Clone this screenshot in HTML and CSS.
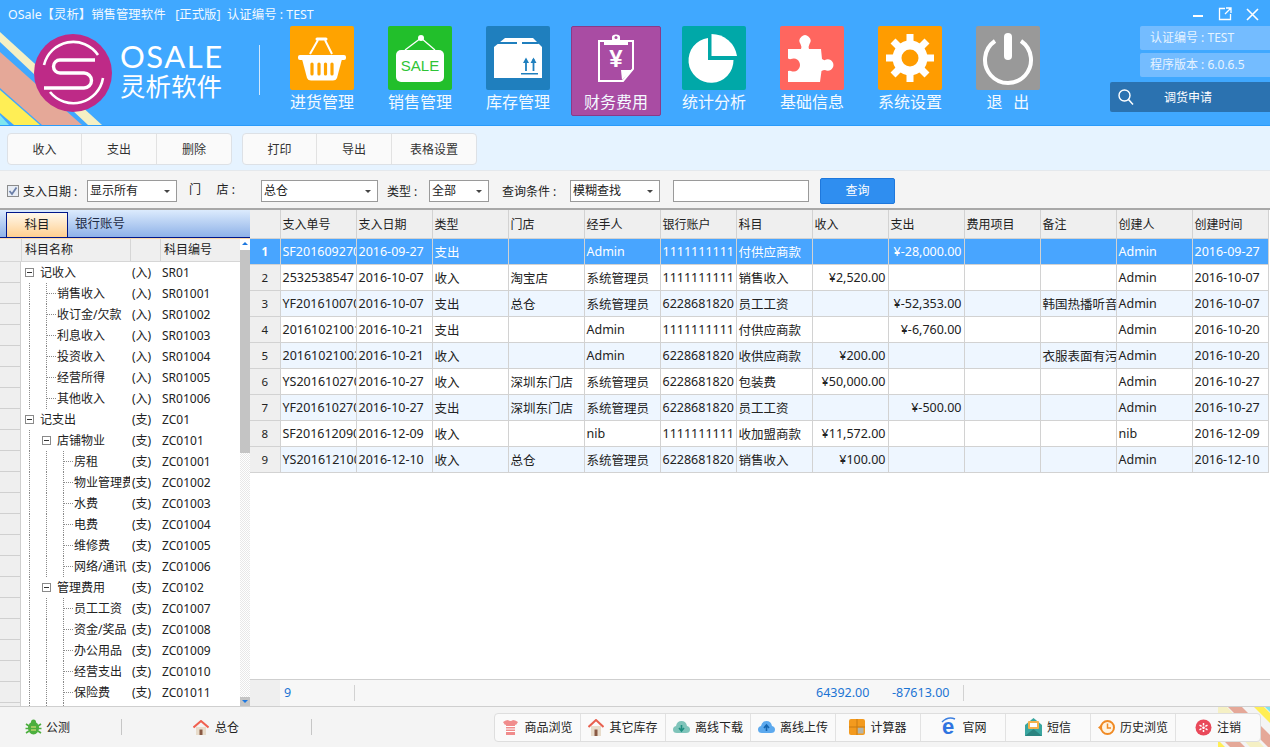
FILE: index.html
```html
<!DOCTYPE html>
<html lang="zh-CN">
<head>
<meta charset="utf-8">
<title>OSale 灵析</title>
<link rel="stylesheet" href="styles.css">
</head>
<body>
<div class="app">
  <header class="header">
    <svg class="stripes" width="110" height="96" viewBox="0 0 110 96">
      <polygon points="0,2 0,12 88,95 102,95" fill="#F5F0C4"/>
      <polygon points="0,22 0,58 42,95 82,95" fill="#E5A898"/>
      <polygon points="0,60 0,83 14,95 40,95" fill="#FFEE55"/>
      <polygon points="0,85 0,95 9,95" fill="#7FE6EE"/>
    </svg>
    <div class="titlebar">
      <span class="title">OSale【灵析】销售管理软件&nbsp;&nbsp;&nbsp;[正式版]&nbsp;&nbsp;认证编号 : TEST</span>
      <div class="winctl">
        <svg width="12" height="12" viewBox="0 0 12 12"><rect x="1" y="7" width="10" height="2" fill="#fff"/></svg>
        <svg width="14" height="14" viewBox="0 0 14 14"><path d="M7 1.500H1.500V12.500H12.500V7M8 1H13V6M13 1L7 7" fill="none" stroke="#fff" stroke-width="1.300"/></svg>
        <svg width="13" height="13" viewBox="0 0 13 13"><path d="M1 1L12 12M12 1L1 12" stroke="#fff" stroke-width="1.600"/></svg>
      </div>
    </div>
    <div class="hbody">
      <div class="brand">
        <svg class="logo" width="78" height="78" viewBox="0 0 78 78">
          <circle cx="39" cy="39" r="39" fill="#BE2A87"/>
          <path d="M61 26H26A6.500 6.500 0 0 0 26 39H50A7.500 7.500 0 0 1 50 54H10" fill="none" stroke="#fff" stroke-width="3.400"/>
          <path d="M10 31A30 30 0 0 1 64 21M69 44A30 30 0 0 1 16 58" fill="none" stroke="#fff" stroke-width="2.600"/>
        </svg>
        <div class="brandtext">
          <div class="osale">OSALE</div>
          <div class="lingxi">灵析软件</div>
        </div>
        <div class="bsep"></div>
      </div>
      <nav class="nav">
        <div class="navitem">
          <div class="ico orange1">
            <svg width="64" height="64" viewBox="0 0 64 64"><path d="M20 28L28 14M42 28L35 14" fill="none" stroke="#fff" stroke-width="2"/><path d="M27 13H36" stroke="#fff" stroke-width="3" stroke-linecap="round"/><path d="M12 33H52L47 52Q46 54.500 43 54.500H21Q18 54.500 17 52Z" fill="#fff"/><rect x="8" y="29" width="48" height="5" rx="2" fill="#fff"/><path d="M22 38V48M29 38V48M35.500 38V48M42 38V48" stroke="#FFA300" stroke-width="3.200" stroke-linecap="round"/></svg>
          </div>
          <div class="navlabel">进货管理</div>
        </div>
        <div class="navitem">
          <div class="ico green">
            <svg width="64" height="64" viewBox="0 0 64 64"><circle cx="33" cy="12" r="3" fill="#fff"/><path d="M33 12L17 24M33 12L47 24" stroke="#fff" stroke-width="1.300"/><rect x="8" y="24" width="48" height="32" rx="5" fill="#fff"/><text x="32" y="44.500" text-anchor="middle" class="saletxt">SALE</text></svg>
          </div>
          <div class="navlabel">销售管理</div>
        </div>
        <div class="navitem">
          <div class="ico blue">
            <svg width="64" height="64" viewBox="0 0 64 64"><path d="M19 12H47L56 21V52H8V21Z" fill="#fff"/><path d="M12 16H31V18H11ZM36 16H52L53 18H36Z" fill="#1F7FBE"/><path d="M40 33V45M47.500 33V45" stroke="#1F7FBE" stroke-width="1.800"/><path d="M40 31.500L37 37H43ZM47.500 31.500L44.500 37H50.500Z" fill="#1F7FBE"/><rect x="35" y="47" width="17" height="1.500" fill="#1F7FBE"/></svg>
          </div>
          <div class="navlabel">库存管理</div>
        </div>
        <div class="navitem active">
          <div class="ico">
            <svg width="64" height="64" viewBox="0 0 64 64"><path d="M21 14H15V54H39L49 42V14H43" fill="none" stroke="#fff" stroke-width="2"/><path d="M20 13H28V10Q28 7.500 32 7.500Q36 7.500 36 10V13H44V18H20Z" fill="#fff"/><circle cx="32" cy="10.500" r="1.500" fill="#A94CA3"/><text x="32" y="40" text-anchor="middle" class="yen">¥</text><path d="M37 43H49L38 53Z" fill="#fff"/></svg>
          </div>
          <div class="navlabel">财务费用</div>
        </div>
        <div class="navitem">
          <div class="ico teal">
            <svg width="64" height="64" viewBox="0 0 64 64"><path d="M26 12V34H51.500A22.500 22.500 0 1 1 26 12Z" fill="#fff"/><path d="M29.500 8V30H55A26 26 0 0 0 29.500 8Z" fill="#fff"/></svg>
          </div>
          <div class="navlabel">统计分析</div>
        </div>
        <div class="navitem">
          <div class="ico coral">
            <svg width="64" height="64" viewBox="0 0 64 64"><path d="M8 23H21Q22 21 20.500 18A5.500 5.500 0 1 1 29.500 18Q28 21 29 23H41L42 33Q44 34.500 45 34A5.700 5.700 0 1 1 45 44Q43 44 41.500 45L40 56H8V45Q10 44.500 11 45A6.500 6.500 0 1 0 11 33Q10 33.500 8 32.500Z" fill="#fff"/></svg>
          </div>
          <div class="navlabel">基础信息</div>
        </div>
        <div class="navitem">
          <div class="ico orange2">
            <svg width="64" height="64" viewBox="0 0 64 64"><g fill="#fff"><rect x="28.500" y="8" width="7" height="48"/><rect x="8" y="28.500" width="48" height="7"/><rect x="28.500" y="8" width="7" height="48" transform="rotate(45 32 32)"/><rect x="28.500" y="8" width="7" height="48" transform="rotate(-45 32 32)"/></g><circle cx="32" cy="32" r="13" fill="none" stroke="#fff" stroke-width="9"/><circle cx="32" cy="32" r="8.500" fill="#FF9C00"/></svg>
          </div>
          <div class="navlabel">系统设置</div>
        </div>
        <div class="navitem">
          <div class="ico grey">
            <svg width="64" height="64" viewBox="0 0 64 64"><path d="M19 15A23 23 0 1 0 45 15" fill="none" stroke="#fff" stroke-width="4"/><rect x="28" y="7" width="8" height="27" rx="4" fill="#fff"/></svg>
          </div>
          <div class="navlabel">退&nbsp;&nbsp;&nbsp;出</div>
        </div>
      </nav>
      <aside class="hside">
        <div class="infobox">认证编号 : TEST</div>
        <div class="infobox">程序版本 : 6.0.6.5</div>
        <div class="apply">
          <svg width="18" height="18" viewBox="0 0 18 18"><circle cx="7.500" cy="7.500" r="5.500" fill="none" stroke="#fff" stroke-width="1.400"/><path d="M11.500 11.500L16 16.500" stroke="#fff" stroke-width="1.500"/></svg>
          <span>调货申请</span>
        </div>
      </aside>
    </div>
  </header>

  <div class="toolbar">
    <div class="btngroup">
      <div class="tbtn">收入</div><div class="tbtn">支出</div><div class="tbtn">删除</div>
    </div>
    <div class="btngroup">
      <div class="tbtn">打印</div><div class="tbtn">导出</div><div class="tbtn wide">表格设置</div>
    </div>
  </div>

  <div class="filter">
    <span class="check"><svg width="10" height="10" viewBox="0 0 10 10"><path d="M1.500 5L4 8L8.500 1.500" fill="none" stroke="#6B7FA8" stroke-width="1.800"/></svg></span>
    <span class="flabel l-date">支入日期 :</span>
    <div class="sel w90">显示所有</div>
    <span class="flabel l-store">门&nbsp;&nbsp;&nbsp;&nbsp;&nbsp;店 :</span>
    <div class="sel w117">总仓</div>
    <span class="flabel l-type">类型 :</span>
    <div class="sel w60">全部</div>
    <span class="flabel l-cond">查询条件 :</span>
    <div class="sel w90">模糊查找</div>
    <div class="finput"></div>
    <div class="querybtn">查询</div>
  </div>

  <main class="main">
    <section class="left">
      <div class="tabs">
        <div class="tab on">科目</div>
        <div class="tab">银行账号</div>
      </div>
      <div class="treewrap">
        <div class="treemain">
          <div class="treehead">
            <div class="th0"></div>
            <div class="th1">科目名称</div>
            <div class="th2"></div>
            <div class="th3">科目编号</div>
          </div>
          <div class="treebody">
            <div class="tr"><div class="ind"></div><div class="nm"><i class="box"></i>记收入</div><div class="tg">(入)</div><div class="cd">SR01</div></div>
            <div class="tr"><div class="ind"></div><div class="nm"><i class="g"></i><i class="h"></i>销售收入</div><div class="tg">(入)</div><div class="cd">SR01001</div></div>
            <div class="tr"><div class="ind"></div><div class="nm"><i class="g"></i><i class="h"></i>收订金/欠款</div><div class="tg">(入)</div><div class="cd">SR01002</div></div>
            <div class="tr"><div class="ind"></div><div class="nm"><i class="g"></i><i class="h"></i>利息收入</div><div class="tg">(入)</div><div class="cd">SR01003</div></div>
            <div class="tr"><div class="ind"></div><div class="nm"><i class="g"></i><i class="h"></i>投资收入</div><div class="tg">(入)</div><div class="cd">SR01004</div></div>
            <div class="tr"><div class="ind"></div><div class="nm"><i class="g"></i><i class="h"></i>经营所得</div><div class="tg">(入)</div><div class="cd">SR01005</div></div>
            <div class="tr"><div class="ind"></div><div class="nm"><i class="g"></i><i class="h"></i>其他收入</div><div class="tg">(入)</div><div class="cd">SR01006</div></div>
            <div class="tr"><div class="ind"></div><div class="nm"><i class="box"></i>记支出</div><div class="tg">(支)</div><div class="cd">ZC01</div></div>
            <div class="tr"><div class="ind"></div><div class="nm"><i class="g"></i><i class="box"></i>店铺物业</div><div class="tg">(支)</div><div class="cd">ZC0101</div></div>
            <div class="tr"><div class="ind"></div><div class="nm"><i class="g"></i><i class="g"></i><i class="h"></i>房租</div><div class="tg">(支)</div><div class="cd">ZC01001</div></div>
            <div class="tr"><div class="ind"></div><div class="nm"><i class="g"></i><i class="g"></i><i class="h"></i>物业管理费</div><div class="tg">(支)</div><div class="cd">ZC01002</div></div>
            <div class="tr"><div class="ind"></div><div class="nm"><i class="g"></i><i class="g"></i><i class="h"></i>水费</div><div class="tg">(支)</div><div class="cd">ZC01003</div></div>
            <div class="tr"><div class="ind"></div><div class="nm"><i class="g"></i><i class="g"></i><i class="h"></i>电费</div><div class="tg">(支)</div><div class="cd">ZC01004</div></div>
            <div class="tr"><div class="ind"></div><div class="nm"><i class="g"></i><i class="g"></i><i class="h"></i>维修费</div><div class="tg">(支)</div><div class="cd">ZC01005</div></div>
            <div class="tr"><div class="ind"></div><div class="nm"><i class="g"></i><i class="g"></i><i class="h"></i>网络/通讯</div><div class="tg">(支)</div><div class="cd">ZC01006</div></div>
            <div class="tr"><div class="ind"></div><div class="nm"><i class="g"></i><i class="box"></i>管理费用</div><div class="tg">(支)</div><div class="cd">ZC0102</div></div>
            <div class="tr"><div class="ind"></div><div class="nm"><i class="g"></i><i class="g"></i><i class="h"></i>员工工资</div><div class="tg">(支)</div><div class="cd">ZC01007</div></div>
            <div class="tr"><div class="ind"></div><div class="nm"><i class="g"></i><i class="g"></i><i class="h"></i>资金/奖品</div><div class="tg">(支)</div><div class="cd">ZC01008</div></div>
            <div class="tr"><div class="ind"></div><div class="nm"><i class="g"></i><i class="g"></i><i class="h"></i>办公用品</div><div class="tg">(支)</div><div class="cd">ZC01009</div></div>
            <div class="tr"><div class="ind"></div><div class="nm"><i class="g"></i><i class="g"></i><i class="h"></i>经营支出</div><div class="tg">(支)</div><div class="cd">ZC01010</div></div>
            <div class="tr"><div class="ind"></div><div class="nm"><i class="g"></i><i class="g"></i><i class="h"></i>保险费</div><div class="tg">(支)</div><div class="cd">ZC01011</div></div>
            <div class="tr"><div class="ind"></div><div class="nm"><i class="g"></i><i class="g"></i><i class="g"></i></div><div class="tg"></div><div class="cd"></div></div>
          </div>
        </div>
        <div class="scroll">
          <div class="sup"></div>
          <div class="sthumb"></div>
          <div class="strack"></div>
          <div class="sdown"></div>
        </div>
      </div>
    </section>

    <section class="right">
      <div class="gridarea">
        <table class="grid">
          <colgroup><col class="c0"><col class="c"><col class="c"><col class="c"><col class="c"><col class="c"><col class="c"><col class="c"><col class="c"><col class="c"><col class="c"><col class="c"><col class="c"><col class="c"></colgroup>
          <thead>
            <tr><th></th><th>支入单号</th><th>支入日期</th><th>类型</th><th>门店</th><th>经手人</th><th>银行账户</th><th>科目</th><th>收入</th><th>支出</th><th>费用项目</th><th>备注</th><th>创建人</th><th>创建时间</th></tr>
          </thead>
          <tbody>
            <tr class="sel-row"><td class="rn">1</td><td>SF2016092700</td><td>2016-09-27</td><td>支出</td><td></td><td>Admin</td><td>1111111111</td><td>付供应商款</td><td class="num"></td><td class="num">¥-28,000.00</td><td></td><td></td><td>Admin</td><td>2016-09-27</td></tr>
            <tr><td class="rn">2</td><td>2532538547</td><td>2016-10-07</td><td>收入</td><td>淘宝店</td><td>系统管理员</td><td>1111111111</td><td>销售收入</td><td class="num">¥2,520.00</td><td class="num"></td><td></td><td></td><td>Admin</td><td>2016-10-07</td></tr>
            <tr class="alt"><td class="rn">3</td><td>YF2016100700</td><td>2016-10-07</td><td>支出</td><td>总仓</td><td>系统管理员</td><td>6228681820</td><td>员工工资</td><td class="num"></td><td class="num">¥-52,353.00</td><td></td><td>韩国热播听音</td><td>Admin</td><td>2016-10-07</td></tr>
            <tr><td class="rn">4</td><td>20161021001</td><td>2016-10-21</td><td>支出</td><td></td><td>Admin</td><td>1111111111</td><td>付供应商款</td><td class="num"></td><td class="num">¥-6,760.00</td><td></td><td></td><td>Admin</td><td>2016-10-20</td></tr>
            <tr class="alt"><td class="rn">5</td><td>20161021002</td><td>2016-10-21</td><td>收入</td><td></td><td>Admin</td><td>6228681820</td><td>收供应商款</td><td class="num">¥200.00</td><td class="num"></td><td></td><td>衣服表面有污渍</td><td>Admin</td><td>2016-10-20</td></tr>
            <tr><td class="rn">6</td><td>YS2016102700</td><td>2016-10-27</td><td>收入</td><td>深圳东门店</td><td>系统管理员</td><td>6228681820</td><td>包装费</td><td class="num">¥50,000.00</td><td class="num"></td><td></td><td></td><td>Admin</td><td>2016-10-27</td></tr>
            <tr class="alt"><td class="rn">7</td><td>YF2016102700</td><td>2016-10-27</td><td>支出</td><td>深圳东门店</td><td>系统管理员</td><td>6228681820</td><td>员工工资</td><td class="num"></td><td class="num">¥-500.00</td><td></td><td></td><td>Admin</td><td>2016-10-27</td></tr>
            <tr><td class="rn">8</td><td>SF2016120900</td><td>2016-12-09</td><td>收入</td><td></td><td>nib</td><td>1111111111</td><td>收加盟商款</td><td class="num">¥11,572.00</td><td class="num"></td><td></td><td></td><td>nib</td><td>2016-12-09</td></tr>
            <tr class="alt"><td class="rn">9</td><td>YS2016121000</td><td>2016-12-10</td><td>收入</td><td>总仓</td><td>系统管理员</td><td>6228681820</td><td>销售收入</td><td class="num">¥100.00</td><td class="num"></td><td></td><td></td><td>Admin</td><td>2016-12-10</td></tr>
          </tbody>
        </table>
      </div>
      <div class="sumbar">
        <div class="s0"></div>
        <div class="s1">9</div>
        <div class="s6"></div>
        <div class="s2">64392.00</div>
        <div class="s3">-87613.00</div>
      </div>
    </section>
  </main>

  <footer class="footer">
    <svg class="fstripes" width="52" height="40" viewBox="0 0 52 40">
      <polygon points="-40,0 -33,0 7,40 0,40" fill="#FFEE55"/>
      <polygon points="-28,0 -13,0 27,40 12,40" fill="#E5A898"/>
      <polygon points="-5,0 9,0 46,40 32,40" fill="#F5F0C4"/>
      <polygon points="10,0 24,0 64,40 50,40" fill="#E5A898"/>
      <polygon points="36,0 46,0 86,40 76,40" fill="#FFEE55"/>
      <polygon points="47,0 60,0 100,40 87,40" fill="#7FE6EE"/>
    </svg>
    <div class="fleft f1">
      <svg width="17" height="17" viewBox="0 0 17 17"><ellipse cx="8.500" cy="9" rx="5.500" ry="6.500" fill="#4CAF3E"/><circle cx="8.500" cy="3" r="2.500" fill="#4CAF3E"/><path d="M1 5L4 7M16 5L13 7M0.500 9.500H4M16.500 9.500H13M1 14L4 12M16 14L13 12" stroke="#4CAF3E" stroke-width="1.600"/><path d="M6 8H11M6 11H11" stroke="#B9D46A" stroke-width="1.500"/></svg>
      <span>公测</span>
    </div>
    <div class="fleft f2">
      <svg width="16" height="15" viewBox="0 0 16 15"><path d="M3 7H13V15H3Z" fill="#E8DCCB"/><path d="M0.500 7.500L8 1L15.500 7.500" fill="none" stroke="#F0604F" stroke-width="2"/><rect x="6.500" y="9.500" width="3" height="5.500" fill="#8A5A44"/></svg>
      <span>总仓</span>
    </div>
    <div class="fspace"></div>
    <div class="fbtns">
      <div class="fbtn">
        <svg width="17" height="17" viewBox="0 0 17 17"><path d="M1 3Q4 1 6 1Q8.500 3 11 1Q13 1 16 3L14 6L13 5.500V16H4V5.500L3 6Z" fill="#F08C8C"/><path d="M4 7.500H13M4 10H13M4 12.500H13" stroke="#fff" stroke-width="1.100"/></svg>
        <span>商品浏览</span>
      </div>
      <div class="fbtn">
        <svg width="16" height="17" viewBox="0 0 16 17"><path d="M3 7H13V17H3Z" fill="#E8DCCB"/><path d="M0.500 8L8 1L15.500 8" fill="none" stroke="#E8604F" stroke-width="2"/><rect x="6.500" y="10.500" width="3" height="6.500" fill="#8A5A44"/></svg>
        <span>其它库存</span>
      </div>
      <div class="fbtn">
        <svg width="17" height="14" viewBox="0 0 17 14"><path d="M4 13Q0 13 0 9.500Q0 6.500 3 6Q4 1 8.500 1Q13 1 14 6Q17 6.500 17 9.500Q17 13 13 13Z" fill="#7FC4BA"/><path d="M8.500 5V10M6 8L8.500 11L11 8" fill="none" stroke="#1E8E80" stroke-width="1.600"/></svg>
        <span>离线下载</span>
      </div>
      <div class="fbtn">
        <svg width="17" height="14" viewBox="0 0 17 14"><path d="M4 13Q0 13 0 9.500Q0 6.500 3 6Q4 1 8.500 1Q13 1 14 6Q17 6.500 17 9.500Q17 13 13 13Z" fill="#5CA9EE"/><path d="M8.500 11V6M6 8L8.500 5L11 8" fill="none" stroke="#1565B0" stroke-width="1.600"/></svg>
        <span>离线上传</span>
      </div>
      <div class="fbtn">
        <svg width="16" height="16" viewBox="0 0 16 16"><rect width="16" height="16" rx="2" fill="#F39A1E"/><rect x="8.500" y="8.500" width="6" height="6" fill="#B5B5A8"/><path d="M8 0V16M0 8H16" stroke="#C97A10" stroke-width="1"/></svg>
        <span>计算器</span>
      </div>
      <div class="fbtn">
        <svg width="18" height="20" viewBox="0 0 18 20"><text x="9" y="17" text-anchor="middle" class="ie">e</text><path d="M3 5Q9 -1 16 2" fill="none" stroke="#3C7FE0" stroke-width="1.500"/></svg>
        <span>官网</span>
      </div>
      <div class="fbtn">
        <svg width="17" height="18" viewBox="0 0 17 18"><path d="M0 7L8.500 0L17 7V18H0Z" fill="#3AA6A0"/><rect x="3" y="3" width="11" height="8" rx="1" fill="#F5B24A"/><rect x="5" y="5" width="7" height="4" fill="#fff"/><path d="M0 18L8.500 11L17 18" fill="#2B8480"/></svg>
        <span>短信</span>
      </div>
      <div class="fbtn">
        <svg width="17" height="17" viewBox="0 0 17 17"><circle cx="9.500" cy="8.500" r="6.500" fill="#FFF3E0" stroke="#F08A24" stroke-width="2"/><path d="M9.500 4.500V9H13" fill="none" stroke="#F08A24" stroke-width="1.500"/><path d="M0 8.500L3 6V11Z" fill="#F08A24"/></svg>
        <span>历史浏览</span>
      </div>
      <div class="fbtn">
        <svg width="17" height="17" viewBox="0 0 17 17"><circle cx="8.500" cy="8.500" r="8" fill="#E9495A"/><path d="M8.500 4V13M4.500 6.200L12.500 10.800M12.500 6.200L4.500 10.800" stroke="#fff" stroke-width="1.500" stroke-dasharray="2.500 1"/></svg>
        <span>注销</span>
      </div>
    </div>
  </footer>
</div>
</body>
</html>
```

FILE: styles.css
```css
* { box-sizing: border-box; }
html, body { margin: 0; padding: 0; width: 1270px; height: 747px; overflow: hidden; }
body { font-family: "Noto Sans", "Noto Sans CJK SC", sans-serif; font-size: 12.5px; color: #222; }
.app { width: 1270px; height: 747px; display: flex; flex-direction: column; background: #fff; }

/* header */
.header { position: relative; height: 126px; flex: none; background: #40A8FF; border-bottom: 1px solid #2A9BFA; color: #fff; overflow: hidden; }
.stripes { position: absolute; left: 0; top: 30px; }
.titlebar { position: relative; height: 26px; display: flex; align-items: center; justify-content: space-between; padding: 2px 11px 0 8px; }
.title { font-size: 12.4px; color: #F2F9FF; white-space: nowrap; }
.winctl { display: flex; align-items: center; gap: 14px; }
.hbody { position: relative; display: flex; height: 99px; }
.brand { width: 290px; flex: none; display: flex; padding-left: 34px; padding-top: 8px; }
.logo { flex: none; }
.brandtext { margin-left: 8px; width: 105px; }
.osale { font-family: "Lato", sans-serif; font-weight: 400; font-size: 31px; line-height: 30px; margin-top: 7px; letter-spacing: 1.500px; }
.lingxi { font-family: "Noto Sans CJK SC", sans-serif; font-size: 25.500px; line-height: 34px; margin-top: -3px; white-space: nowrap; }
.bsep { width: 1px; height: 50px; background: #CFE8FF; margin: 11px 0 0 34px; }

.nav { display: flex; gap: 34px; flex: none; width: 750px; }
.navitem { width: 64px; height: 90px; text-align: center; }
.navitem.active { width: 90px; margin: 0 -13px; background: #A94CA3; border: 1px solid #8A3A88; border-radius: 2px; }
.navitem.active .ico { width: 64px; margin: 0 auto; height: 63px; }
.ico { width: 64px; height: 64px; border-radius: 2px; }
.ico svg { display: block; }
.orange1 { background: #FFA300; }
.green { background: #22BF2B; }
.blue { background: #1F7FBE; }
.teal { background: #00A8A8; }
.coral { background: #FF665F; }
.orange2 { background: #FF9C00; }
.grey { background: #999; }
.navlabel { font-family: "Noto Sans CJK SC", sans-serif; font-size: 16px; line-height: 23px; white-space: nowrap; color: #F4FAFF; }
.saletxt { font-family: "Liberation Sans", sans-serif; font-size: 15px; fill: #2FC436; }
.yen { font-family: "Liberation Sans", sans-serif; font-size: 24px; font-weight: 700; fill: #fff; }
.ie { font-family: "Liberation Sans", sans-serif; font-size: 22px; font-weight: 700; fill: #2F74E0; }

.hside { flex: 1; display: flex; flex-direction: column; align-items: flex-end; }
.infobox { width: 130px; height: 24px; margin-bottom: 3px; background: #74BCFF; color: #E6F3FF; border-radius: 2px 0 0 2px; font-size: 12px; line-height: 23px; padding-left: 10px; white-space: nowrap; }
.apply { width: 160px; height: 30px; margin-top: 2px; background: #2B72B0; border-radius: 2px 0 0 2px; display: flex; align-items: center; padding-left: 7px; font-size: 12px; }
.apply span { margin-left: 29px; }

/* toolbar */
.toolbar { height: 44px; flex: none; background: #E6F3FF; display: flex; gap: 10px; padding: 7px 0 0 7px; }
.btngroup { display: flex; height: 32px; background: #FAFAFA; border: 1px solid #DDE1E6; border-radius: 4px; }
.tbtn { width: 75px; text-align: center; line-height: 32px; border-left: 1px solid #E2E2E2; font-size: 12px; color: #333; }
.tbtn:first-child { border-left: 0; width: 73px; }
.tbtn.wide { width: 85px; }

/* filter */
.filter { height: 40px; flex: none; background: #F4F4F4; border-top: 1px solid #E4E8EC; border-bottom: 2px solid #A8A8A8; display: flex; align-items: center; padding: 3px 0 0 7px; font-size: 12px; }
.check { width: 12px; height: 12px; border: 1px solid #8C8C8C; background: #E8EDF5; display: block; line-height: 0; }
.flabel { white-space: nowrap; }
.l-date { margin-left: 4px; width: 64px; }
.l-store { margin: 0 0 4px 12px; width: 72px; }
.l-type { margin-left: 9px; width: 42px; }
.l-cond { margin-left: 13px; width: 68px; }
.sel { position: relative; height: 22px; background: #fff; border: 1px solid #9A9A9A; line-height: 20px; padding-left: 2px; font-size: 12px; }
.sel::after { content: ""; position: absolute; right: 6px; top: 9px; border: 3.500px solid transparent; border-top: 3.500px solid #444; border-bottom: 0; }
.w90 { width: 90px; }
.w117 { width: 117px; }
.w60 { width: 60px; }
.finput { width: 136px; height: 22px; margin-left: 13px; background: #fff; border: 1px solid #9A9A9A; }
.querybtn { width: 75px; height: 26px; margin-left: 11px; background: #2F8EF0; border: 1px solid #1F78DC; border-radius: 2px; color: #fff; text-align: center; line-height: 24px; }

/* main */
.main { flex: 1; min-height: 0; display: flex; }
.left { width: 250px; flex: none; display: flex; flex-direction: column; }
.tabs { position: relative; height: 29px; flex: none; display: flex; align-items: flex-end; padding: 0 0 2px 6px; background: linear-gradient(#DCEBFD, #8FB2E8 93%, #FFD9A8 93%); }
.tabs::after { content: ""; position: absolute; left: 0; right: 0; bottom: 1px; height: 1px; background: #00178A; }
.tab { position: relative; z-index: 1; height: 25px; width: 62px; line-height: 24px; text-align: center; font-size: 12.500px; color: #1D2B45; white-space: nowrap; }
.tab.on { background: linear-gradient(#FFF8EC, #FFCF8F); border: 1px solid #00178A; border-bottom: 0; color: #222; }
.tab + .tab { width: auto; padding-left: 7px; }
.treewrap { flex: 1; min-height: 0; display: flex; }
.treemain { width: 240px; flex: none; overflow: hidden; }
.treehead { display: flex; height: 23px; background: #EFEFEF; border-bottom: 1px solid #D6D6D6; line-height: 22px; font-size: 12px; }
.th0 { width: 21px; }
.th1 { width: 109px; padding-left: 3px; border-left: 1px solid #D6D6D6; }
.th2 { width: 30px; border-left: 1px solid #D6D6D6; }
.th3 { flex: 1; padding-left: 3px; border-left: 1px solid #D6D6D6; }
.tr { display: flex; height: 21px; line-height: 21px; font-size: 12px; }
.ind { width: 21px; flex: none; background: #EFEFEF; border-right: 1px solid #D0D0D0; border-bottom: 1px solid #D0D0D0; }
.nm { width: 109px; flex: none; display: flex; padding-left: 8px; white-space: nowrap; overflow: hidden; }
.tg { width: 30px; flex: none; padding-left: 2px; }
.cd { flex: 1; padding-left: 2px; }
.g { display: block; flex: none; width: 17px; height: 21px; border-left: 1px dotted #8A8A8A; }
.h { display: block; position: relative; flex: none; width: 11px; height: 21px; border-left: 1px dotted #8A8A8A; }
.h::after { content: ""; position: absolute; left: 0; top: 10px; width: 9px; border-top: 1px dotted #8A8A8A; }
.box { display: block; position: relative; flex: none; width: 9px; height: 9px; margin: 6px 6px 6px -4px; border: 1px solid #8A8A8A; background: #fff; }
.box::after { content: ""; position: absolute; left: 1px; top: 3px; width: 5px; height: 1px; background: #333; }
.scroll { width: 10px; flex: none; display: flex; flex-direction: column; }
.sup { height: 11px; background: #fff; position: relative; }
.sup::after { content: ""; position: absolute; left: 2px; top: 3px; border: 3px solid transparent; border-bottom: 3px solid #1E78E0; border-top: 0; }
.sthumb { height: 203px; background: #C4C4C4; }
.strack { flex: 1; background: repeating-conic-gradient(#E8E8E8 0 25%, #fff 0 50%) 0 0 / 2px 2px; }
.sdown { height: 9px; background: #C4C4C4; position: relative; }
.sdown::after { content: ""; position: absolute; left: 2px; top: 3px; border: 3px solid transparent; border-top: 3px solid #1E78E0; border-bottom: 0; }

.right { flex: 1; min-width: 0; display: flex; flex-direction: column; }
.gridarea { flex: 1; min-height: 0; overflow: hidden; }
.grid { table-layout: fixed; width: 1018px; border-collapse: collapse; }
.c0 { width: 30px; }
.c { width: 76px; }
.grid th { height: 28px; background: #EFEFEF; border-right: 1px solid #D2D2D2; border-bottom: 1px solid #D2D2D2; font-weight: 400; text-align: left; font-size: 12px; padding: 0 2px; overflow: hidden; white-space: nowrap; }
.grid td { height: 26px; padding: 0 2px; border-right: 1px solid #D2D2D2; border-bottom: 1px solid #D2D2D2; overflow: hidden; white-space: nowrap; }
.grid .rn { background: #EFEFEF; text-align: center; font-size: 11.500px; padding: 0; }
.grid .num { text-align: right; }
.alt td { background: #EEF6FF; }
.sel-row td { background: #48A5FF; color: #fff; }
.grid .sel-row .rn { background: #48A5FF; font-weight: 700; }
.sumbar { height: 27px; flex: none; display: flex; background: #F7F7F7; border-top: 1px solid #CFCFCF; color: #1C74D4; line-height: 26px; }
.s0 { width: 30px; background: #EFEFEF; }
.s1 { width: 75px; padding-left: 4px; border-right: 1px solid #D2D2D2; margin: 5px 0; line-height: 16px; }
.s6 { width: 457px; }
.s2 { width: 76px; padding-left: 4px; line-height: 26px; }
.s3 { width: 76px; padding-left: 4px; border-right: 1px solid #D2D2D2; margin: 5px 0; line-height: 16px; }

/* footer */
.footer { position: relative; height: 41px; flex: none; background: #F4F4F4; border-top: 1px solid #CFCFCF; display: flex; align-items: center; font-size: 12px; }
.fstripes { position: absolute; right: 0; top: 0; }
.fleft { display: flex; align-items: center; gap: 4px; height: 16px; border-right: 1px solid #C6C6C6; }
.f1 { width: 122px; padding-left: 25px; }
.f2 { width: 190px; padding-left: 71px; gap: 6px; }
.fspace { width: 182px; }
.fbtns { position: relative; display: flex; height: 29px; background: #FAFAFA; border: 1px solid #DEDEDE; border-radius: 4px; }
.fbtn { width: 85px; display: flex; align-items: center; justify-content: center; gap: 5px; border-left: 1px solid #E2E2E2; white-space: nowrap; }
.fbtn:first-child { border-left: 0; }
```
